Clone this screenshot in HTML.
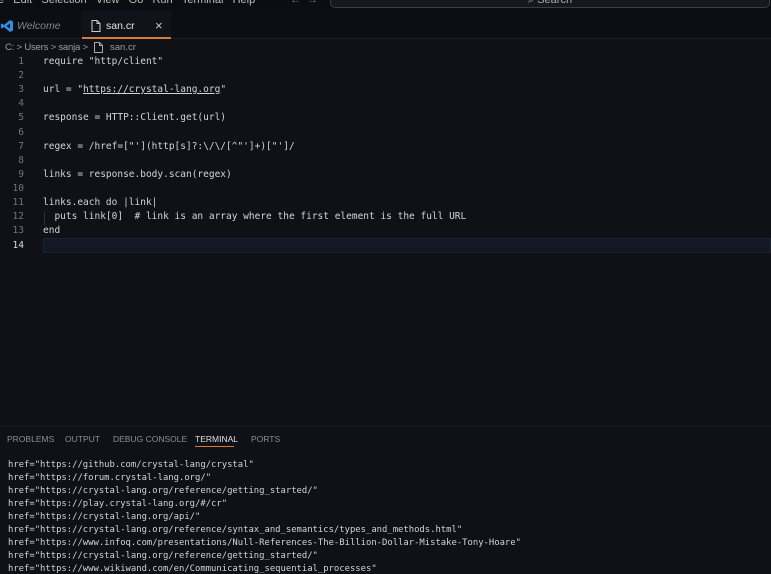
<!DOCTYPE html>
<html><head><style>
*{margin:0;padding:0;box-sizing:border-box}
body{width:771px;height:573px;overflow:hidden;background:#0f1117;font-family:"Liberation Sans",sans-serif;color:#cccccc;position:relative}
.abs{position:absolute;white-space:pre}
.title{position:absolute;left:0;top:0;width:771px;height:11px;background:#0b0d12}
.menu{font-size:11px;color:#bbb;top:-6px}
.search{position:absolute;left:330px;top:-8px;width:440px;height:16px;border:1px solid #3a3d44;border-radius:5px;background:#16181e}
.tabs{position:absolute;left:0;top:11px;width:771px;height:28px;background:#0c0e13;border-bottom:1px solid #1c1f26}
.tab{position:absolute;top:0;height:28px;font-size:11px}
.code{font-family:"DejaVu Sans Mono",monospace;font-size:9.5px;color:#d4d4d4}
.ln{font-family:"DejaVu Sans Mono",monospace;font-size:9.5px;color:#6e7681;text-align:right;width:24px;left:0}
.term{font-family:"DejaVu Sans Mono",monospace;font-size:8.9px;color:#d4d4d4;left:8px}
.ptab{font-size:8.5px;color:#8b8f96;top:434px}
</style></head><body>
<div class="title"></div>
<div class="abs menu" style="left:-2px">e&nbsp;&nbsp;&nbsp;Edit&nbsp;&nbsp;&nbsp;Selection&nbsp;&nbsp;&nbsp;View&nbsp;&nbsp;&nbsp;Go&nbsp;&nbsp;&nbsp;Run&nbsp;&nbsp;&nbsp;Terminal&nbsp;&nbsp;&nbsp;Help</div>
<div class="abs menu" style="left:290px;color:#777">&larr;&nbsp;&nbsp;&rarr;</div>
<div class="search"></div>
<div class="abs menu" style="left:528px;color:#aaa">⌕ Search</div>
<div class="tabs">
 <div class="tab" style="left:0;width:82px">
  <svg class="abs" style="left:1px;top:9px" width="12" height="12" viewBox="0 0 12 12"><path d="M9 0 L12 1.5 V10.5 L9 12 L3 7 L1 8.5 L0 8 V4 L1 3.5 L3 5 Z M9 3.5 L5.5 6 L9 8.5 Z" fill="#2f8fe0"/></svg>
  <div class="abs" style="left:17px;top:9px;font-style:italic;color:#7f848c;font-size:10.5px">Welcome</div>
 </div>
 <div class="tab" style="left:82px;width:89px;background:#10131a;border-bottom:2px solid #d87a35">
  <svg class="abs" style="left:9px;top:9px" width="10" height="12" viewBox="0 0 10 12"><path d="M1 .5h5l3 3v8H1z M6 .5v3h3" fill="none" stroke="#ccc" stroke-width="1"/></svg>
  <div class="abs" style="left:24px;top:9px;color:#e6e6e6;font-size:10.5px">san.cr</div>
  <div class="abs" style="left:73px;top:7px;color:#ccc;font-size:13px">×</div>
 </div>
</div>
<div class="abs" style="left:5px;top:42px;font-size:9.5px;color:#9a9ea5;letter-spacing:-0.2px">C: &gt; Users &gt; sanja &gt;</div>
<svg class="abs" style="left:94px;top:42px" width="9" height="11" viewBox="0 0 9 11"><path d="M.5 .5h5l3 3v7H.5z M5.5 .5v3h3" fill="none" stroke="#aaa"/></svg>
<div class="abs" style="left:110px;top:42px;font-size:9.5px;color:#9a9ea5">san.cr</div>

<div style="position:absolute;left:43px;top:238px;width:728px;height:15px;background:#121925;border:1px solid #1b2231"></div>
<div style="position:absolute;left:44px;top:211px;width:1px;height:14px;background:#2a2e36"></div>

<div class="abs ln" style="top:56px">1</div>
<div class="abs ln" style="top:70px">2</div>
<div class="abs ln" style="top:84px">3</div>
<div class="abs ln" style="top:98px">4</div>
<div class="abs ln" style="top:112px">5</div>
<div class="abs ln" style="top:127px">6</div>
<div class="abs ln" style="top:141px">7</div>
<div class="abs ln" style="top:155px">8</div>
<div class="abs ln" style="top:169px">9</div>
<div class="abs ln" style="top:183px">10</div>
<div class="abs ln" style="top:197px">11</div>
<div class="abs ln" style="top:211px">12</div>
<div class="abs ln" style="top:225px">13</div>
<div class="abs ln" style="top:240px;color:#ddd">14</div>

<div class="abs code" style="left:43px;top:56px">require "http/client"</div>
<div class="abs code" style="left:43px;top:84px">url = "<u>https://crystal-lang.org</u>"</div>
<div class="abs code" style="left:43px;top:112px">response = HTTP::Client.get(url)</div>
<div class="abs code" style="left:43px;top:141px">regex = /href=["'](http[s]?:\/\/[^"']+)["']/</div>
<div class="abs code" style="left:43px;top:169px">links = response.body.scan(regex)</div>
<div class="abs code" style="left:43px;top:197px">links.each do |link|</div>
<div class="abs code" style="left:43px;top:211px">  puts link[0]  # link is an array where the first element is the full URL</div>
<div class="abs code" style="left:43px;top:225px">end</div>

<div style="position:absolute;left:0;top:426px;width:771px;height:1px;background:#181b22"></div>
<div class="abs ptab" style="left:7px">PROBLEMS</div>
<div class="abs ptab" style="left:65px">OUTPUT</div>
<div class="abs ptab" style="left:113px">DEBUG CONSOLE</div>
<div class="abs ptab" style="left:195px;color:#e0e0e0">TERMINAL</div>
<div style="position:absolute;left:195px;top:446px;width:39px;height:1px;background:#d87a35"></div>
<div class="abs ptab" style="left:251px">PORTS</div>

<div class="abs term" style="top:460px">href="https://github.com/crystal-lang/crystal"</div>
<div class="abs term" style="top:473px">href="https://forum.crystal-lang.org/"</div>
<div class="abs term" style="top:486px">href="https://crystal-lang.org/reference/getting_started/"</div>
<div class="abs term" style="top:499px">href="https://play.crystal-lang.org/#/cr"</div>
<div class="abs term" style="top:512px">href="https://crystal-lang.org/api/"</div>
<div class="abs term" style="top:525px">href="https://crystal-lang.org/reference/syntax_and_semantics/types_and_methods.html"</div>
<div class="abs term" style="top:538px">href="https://www.infoq.com/presentations/Null-References-The-Billion-Dollar-Mistake-Tony-Hoare"</div>
<div class="abs term" style="top:551px">href="https://crystal-lang.org/reference/getting_started/"</div>
<div class="abs term" style="top:564px">href="https://www.wikiwand.com/en/Communicating_sequential_processes"</div>
</body></html>
